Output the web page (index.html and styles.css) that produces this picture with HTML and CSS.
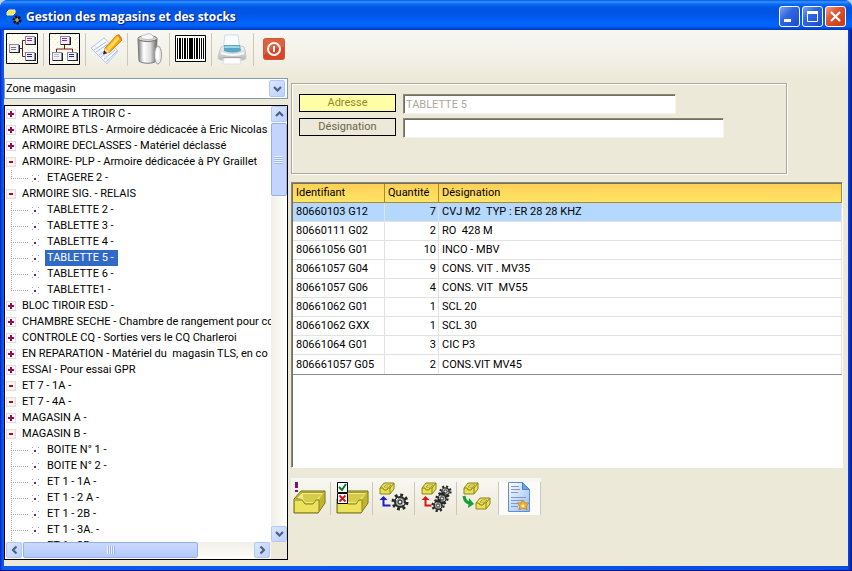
FILE: index.html
```html
<!DOCTYPE html>
<html lang="fr">
<head>
<meta charset="utf-8">
<title>Gestion des magasins et des stocks</title>
<link rel="stylesheet" href="styles.css">
</head>
<body>
<svg class="defs" aria-hidden="true">
  <defs>
    <linearGradient id="metal"><stop offset="0" stop-color="#777"/><stop offset=".3" stop-color="#fff"/><stop offset=".65" stop-color="#ddd"/><stop offset="1" stop-color="#666"/></linearGradient>
    <linearGradient id="shell" x2="0" y2="1"><stop offset="0" stop-color="#fafafa"/><stop offset="1" stop-color="#b4b6bb"/></linearGradient>
    <linearGradient id="sheet" x2="1" y2="1"><stop offset="0" stop-color="#fff"/><stop offset="1" stop-color="#8dbcf0"/></linearGradient>
    <pattern id="dots" width="5" height="5" patternUnits="userSpaceOnUse"><rect width="5" height="5" fill="#fffef8"/><path d="M1 1h1v1H1zM3 4h1v1H3z" fill="#f8e890"/></pattern>
    <symbol id="node" viewBox="0 0 11 10"><path d="M0 0h10v9H0z" fill="#888aa0"/><path d="M1 9h10V1h-1v7H1z" fill="#222"/><path d="M1 1h8v7H1z" fill="#f2f2fa"/></symbol>
    <symbol id="tray" viewBox="0 0 33 24"><path d="M1 9 8 1h24v12l-7 10H1z" fill="#d8cc3a" stroke="#6f6a14"/><path d="M2 9h7l3 4h8l3-4h3l5-7H9z" fill="#a9a020"/><path d="M4 8 9 3h21l-4 6h-3l-3 4h-8L9 9z" fill="#f0e888"/><path d="M10 8V4h19l-5 5-4 3h-8z" fill="#d6cc4c"/><path d="M2 10h7l3 4h8l3-4h3v12H2z" fill="#ece25c"/><path d="M26 10l5-7v10l-5 8z" fill="#c0b530"/><path d="M2 10h7l3 4h8l3-4h3v12" fill="none" stroke="#8d8520"/></symbol>
    <symbol id="box" viewBox="0 0 16 13"><path d="M1 6 5 1h10v6l-4 5H1z" fill="#e9df58" stroke="#8c8414"/><path d="M1 6h3l1 2h3l1-2h2l4-5M11 6v6" fill="none" stroke="#8c8414"/><path d="M5 5l2-2h5l-2 2z" fill="#fffbb0" stroke="#aaa12c"/></symbol>
    <symbol id="gear" viewBox="0 0 18 18"><circle cx="9" cy="9" r="7" fill="none" stroke="#252525" stroke-width="3" stroke-dasharray="2.8 2.7"/><circle cx="9" cy="9" r="5" fill="#a2abb0" stroke="#2a2a2a" stroke-width="2"/><circle cx="9" cy="9" r="2" fill="#f4f1e4" stroke="#111"/><path d="M5 7l2-2M12 12l1-2" stroke="#fff"/></symbol>
    <symbol id="chev" viewBox="0 0 9 6"><path d="M1 1l3.5 3.5L8 1" fill="none" stroke="#4d6185" stroke-width="2.2"/></symbol>
  </defs>
</svg>
<div class="window">
  <header class="titlebar">
    <svg class="appicon" width="16" height="16" viewBox="0 0 16 16" aria-hidden="true"><path d="M1 3 3 1h6v3L7 6H1z" fill="#f1e64e" stroke="#f9f6a4"/><path d="M2 8v3h3" stroke="#08a" fill="none"/><circle cx="11" cy="11" r="3" fill="#555" stroke="#111" stroke-width="3" stroke-dasharray="2 1"/><path d="M11 9v4M9 11h4" stroke="#bbb"/></svg>
    <h1>Gestion des magasins et des stocks</h1>
    <div class="caption">
      <button type="button" aria-label="Réduire"><svg width="19" height="19" viewBox="0 0 19 19"><path d="M4 12h7v3H4z" fill="#fff"/></svg></button>
      <button type="button" aria-label="Agrandir"><svg width="19" height="19" viewBox="0 0 19 19"><path d="M4.500 5v9.500h10V5" fill="none" stroke="#fff"/><path d="M4 4h11v3H4z" fill="#fff"/></svg></button>
      <button type="button" class="close" aria-label="Fermer"><svg width="19" height="19" viewBox="0 0 19 19"><path d="M5 5l9 9M14 5l-9 9" stroke="#fff" stroke-width="2.200"/></svg></button>
    </div>
  </header>
  <div class="client">
    <nav class="toolbar" aria-label="Outils">
      <div class="tool"><button type="button" aria-label="Arborescence horizontale"><svg width="32" height="32" viewBox="0 0 32 32"><path d="M.500.500h31v30H.500z" fill="url(#dots)" stroke="#000"/><path d="M13 15.500h4M20 7.500h-3.500v16H20" fill="none" stroke="#7c1010"/><use href="#node" x="3" y="11" width="11" height="10"/><use href="#node" x="19" y="3" width="11" height="10"/><use href="#node" x="19" y="19" width="11" height="10"/><path d="M5 14.500h5M5 16.500h5" stroke="#777"/><path d="M21 5.500h5M21 7.500h5" stroke="#a0288c"/><path d="M21 21.500h5M21 23.500h5" stroke="#2424a0"/></svg></button></div>
      <div class="tool"><button type="button" aria-label="Arborescence verticale"><svg width="32" height="32" viewBox="0 0 32 32"><path d="M.500.500h30v31H.500z" fill="url(#dots)" stroke="#000"/><path d="M15.500 12v4M7.500 20v-4h16v4" fill="none" stroke="#7c1010"/><use href="#node" x="11" y="3" width="11" height="10"/><use href="#node" x="3" y="19" width="11" height="10"/><use href="#node" x="18" y="19" width="11" height="10"/><path d="M13 5.500h5M13 7.500h5" stroke="#a0288c"/><path d="M5 21.500h5M5 23.500h5" stroke="#bbb"/><path d="M20 21.500h5M20 23.500h5" stroke="#2424a0"/></svg></button></div>
      <div class="tool"><button type="button" aria-label="Modifier"><svg width="32" height="32" viewBox="0 0 32 32"><path d="M0 15 13 5l14 13-11 13z" fill="#f4f8ff" stroke="#b4c8e8"/><path d="M3 17l12-8M5 19l12-8M8 22l12-9M10 24l12-9M13 26l11-9M15 29l11-11" stroke="#a8c2ea"/><path d="M4 13l14 15" stroke="#d4e0f6"/><path d="M14 15 26 2l5 5-12 12-6 2z" fill="#f9a90e" stroke="#d98208"/><path d="M16 15 27 3l2 2-11 13z" fill="#ffd95a"/><path d="M14 15l5 4-6 2z" fill="#f6d7a0"/><path d="M13 17.500l3 2.500-4 1.500z" fill="#222"/><path d="M26 2l2-1 3 4-1 2z" fill="#e47f1c"/></svg></button></div>
      <div class="tool"><button type="button" aria-label="Supprimer"><svg width="32" height="32" viewBox="0 0 32 32"><path d="M5 6c3 2 16 2 19 0l-1 22c-2 3-14 3-17 0z" fill="url(#metal)" stroke="#777"/><ellipse cx="14.500" cy="5.500" rx="9.500" ry="3" fill="#d8d8dc" stroke="#707070"/><path d="M8 5c0-4 4-2 6-4 3-1 6 1 7 4-3 2-9 2-13 0z" fill="#fafafa" stroke="#bbb"/><ellipse cx="25" cy="22" rx="3.500" ry="9" fill="#ededf0" stroke="#999"/><ellipse cx="24.500" cy="21" rx="1.500" ry="6" fill="#fff"/></svg></button></div>
      <div class="tool"><button type="button" aria-label="Code-barres"><svg width="32" height="32" viewBox="0 0 32 32"><path d="M.500 2.500h30v26H.500z" fill="#fff" stroke="#000"/><path d="M2 5h1v21H2zM4 5h2v21H4zM7 5h1v21H7zM9 5h2v21H9zM12 5h1v21h-1zM14 5h4v21h-4zM19 5h1v21h-1zM21 5h2v21h-2zM24 5h1v21h-1zM26 5h1v21h-1zM28 5h1v21h-1z"/></svg></button></div>
      <div class="tool"><button type="button" aria-label="Imprimer"><svg width="32" height="32" viewBox="0 0 32 32"><path d="M3 17q0-4 4-4h17q4 0 4 4l1 7q0 3-3 3H4q-3 0-3-3z" fill="url(#shell)" stroke="#c4c6c9"/><path d="M8 2h13l2 14H6z" fill="#fbfcff" stroke="#d5d9df"/><path d="M7 12h16l1 6q-8 3-17 0z" fill="#58a8c4"/><path d="M8 13h14l1 2H7z" fill="#9fd6e6"/><path d="M4 20q12 4 23 0" fill="none" stroke="#f8f8f8" stroke-width="2"/><path d="M7 25h16l1 6H6z" fill="#fff" stroke="#dedede"/><path d="M6 24.500h18" stroke="#a4a4a4"/></svg></button></div>
      <div class="tool"><button type="button" aria-label="Quitter"><svg width="32" height="32" viewBox="0 0 32 32"><rect x="4.500" y="5.500" width="21" height="21" rx="2" fill="#da4425" stroke="#c9583c"/><path d="M5 6h20v8Q13 14 5 22z" fill="#e56b48" opacity=".7"/><circle cx="15" cy="16" r="6" fill="none" stroke="#fff" stroke-width="2"/><path d="M15 13v6" stroke="#fff" stroke-width="2"/></svg></button></div>
    </nav>
    <div class="panes">
      <aside class="browser">
        <div class="combo">
          <select aria-label="Type de recherche"><option>Zone magasin</option></select>
          <span class="drop"><svg width="9" height="6"><use href="#chev"/></svg></span>
        </div>
        <div class="tree">
          <ul class="nodes">
            <li><div class="row"><i class="plus"></i><span>ARMOIRE A TIROIR C -</span></div></li>
            <li><div class="row"><i class="plus"></i><span>ARMOIRE BTLS - Armoire dédicacée à Eric Nicolas</span></div></li>
            <li><div class="row"><i class="plus"></i><span>ARMOIRE DECLASSES - Matériel déclassé</span></div></li>
            <li><div class="row"><i class="minus"></i><span>ARMOIRE- PLP - Armoire dédicacée à PY Graillet</span></div>
              <ul><li><i class="leaf"></i><span>ETAGERE 2 -</span></li></ul></li>
            <li><div class="row"><i class="minus"></i><span>ARMOIRE SIG. - RELAIS</span></div>
              <ul>
                <li><i class="leaf"></i><span>TABLETTE 2 -</span></li>
                <li><i class="leaf"></i><span>TABLETTE 3 -</span></li>
                <li><i class="leaf"></i><span>TABLETTE 4 -</span></li>
                <li><i class="leaf"></i><span class="selected">TABLETTE 5 -</span></li>
                <li><i class="leaf"></i><span>TABLETTE 6 -</span></li>
                <li><i class="leaf"></i><span>TABLETTE1 -</span></li>
              </ul></li>
            <li><div class="row"><i class="plus"></i><span>BLOC TIROIR ESD -</span></div></li>
            <li><div class="row"><i class="plus"></i><span>CHAMBRE SECHE - Chambre de rangement pour co</span></div></li>
            <li><div class="row"><i class="plus"></i><span>CONTROLE CQ - Sorties vers le CQ Charleroi</span></div></li>
            <li><div class="row"><i class="plus"></i><span>EN REPARATION - Matériel du&nbsp; magasin TLS, en co</span></div></li>
            <li><div class="row"><i class="plus"></i><span>ESSAI - Pour essai GPR</span></div></li>
            <li><div class="row"><i class="minus"></i><span>ET 7 - 1A -</span></div></li>
            <li><div class="row"><i class="minus"></i><span>ET 7 - 4A -</span></div></li>
            <li><div class="row"><i class="plus"></i><span>MAGASIN A -</span></div></li>
            <li><div class="row"><i class="minus"></i><span>MAGASIN B -</span></div>
              <ul>
                <li><i class="leaf"></i><span>BOITE N° 1 -</span></li>
                <li><i class="leaf"></i><span>BOITE N° 2 -</span></li>
                <li><i class="leaf"></i><span>ET 1 - 1A -</span></li>
                <li><i class="leaf"></i><span>ET 1 - 2 A -</span></li>
                <li><i class="leaf"></i><span>ET 1 - 2B -</span></li>
                <li><i class="leaf"></i><span>ET 1 - 3A. -</span></li>
                <li class="more"><i class="leaf"></i><span>ET 1 - 3B -</span></li>
              </ul></li>
          </ul>
          <div class="scroll vertical">
            <button type="button" class="up" aria-label="Haut"><svg width="9" height="6"><use href="#chev"/></svg></button>
            <div class="thumb"></div>
            <button type="button" class="down" aria-label="Bas"><svg width="9" height="6"><use href="#chev"/></svg></button>
          </div>
          <div class="scroll horizontal">
            <button type="button" class="left" aria-label="Gauche"><svg width="9" height="6"><use href="#chev"/></svg></button>
            <div class="thumb"></div>
            <button type="button" class="right" aria-label="Droite"><svg width="9" height="6"><use href="#chev"/></svg></button>
          </div>
        </div>
      </aside>
      <main class="detail">
        <form class="place">
          <label for="adresse" class="current">Adresse</label>
          <input id="adresse" type="text" value="TABLETTE 5" disabled>
          <label for="designation">Désignation</label>
          <input id="designation" class="wide" type="text">
        </form>
        <div class="stock">
          <table>
            <thead><tr><th class="ident">Identifiant</th><th class="qty">Quantité</th><th>Désignation</th></tr></thead>
            <tbody>
              <tr class="active"><td>80660103 G12</td><td>7</td><td>CVJ M2&nbsp; TYP : ER 28 28 KHZ</td></tr>
              <tr><td>80660111 G02</td><td>2</td><td>RO&nbsp; 428 M</td></tr>
              <tr><td>80661056 G01</td><td>10</td><td>INCO - MBV</td></tr>
              <tr><td>80661057 G04</td><td>9</td><td>CONS. VIT . MV35</td></tr>
              <tr><td>80661057 G06</td><td>4</td><td>CONS. VIT&nbsp; MV55</td></tr>
              <tr><td>80661062 G01</td><td>1</td><td>SCL 20</td></tr>
              <tr><td>80661062 GXX</td><td>1</td><td>SCL 30</td></tr>
              <tr><td>80661064 G01</td><td>3</td><td>CIC P3</td></tr>
              <tr><td>806661057 G05</td><td>2</td><td>CONS.VIT MV45</td></tr>
            </tbody>
          </table>
        </div>
        <div class="actions">
          <div class="tool"><button type="button" aria-label="Nouveau stock"><svg width="33" height="32" viewBox="0 0 33 32"><use href="#tray" y="8" width="33" height="24"/><path d="M2 0h3v6H2zM2 8h3v2H2z" fill="#8a1070"/></svg></button></div>
          <div class="tool"><button type="button" aria-label="Contrôler le stock"><svg width="33" height="32" viewBox="0 0 33 32"><use href="#tray" y="8" width="33" height="24"/><path d="M1.500.500h10v10h-10zM1.500 11.500h10v10h-10z" fill="#fff" stroke="#000"/><path d="M3 5l3 3 4-6" fill="none" stroke="#087a28" stroke-width="2"/><path d="M3.500 13.500l6 6M9.500 13.500l-6 6" stroke="#d81818" stroke-width="2"/></svg></button></div>
          <div class="tool"><button type="button" aria-label="Sortie pour une machine"><svg width="33" height="32" viewBox="0 0 33 32"><use href="#box" x="1" width="16" height="13"/><use href="#gear" x="13" y="11" width="18" height="18"/><path d="M5.500 17v6.500h7" fill="none" stroke="#1c1cc8" stroke-width="2"/><path d="M5.500 14l4 4h-8z" fill="#1c1cc8"/></svg></button></div>
          <div class="tool"><button type="button" aria-label="Sortie pour plusieurs machines"><svg width="33" height="32" viewBox="0 0 33 32"><use href="#box" x="1" width="16" height="13"/><use href="#gear" x="19" y="2" width="13" height="15"/><use href="#gear" x="15" y="9" width="14" height="15"/><use href="#gear" x="11" y="16" width="14" height="15"/><path d="M5.500 17v6.500h6" fill="none" stroke="#d81818" stroke-width="2"/><path d="M5.500 14l4 4h-8z" fill="#d81818"/></svg></button></div>
          <div class="tool"><button type="button" aria-label="Transférer"><svg width="33" height="32" viewBox="0 0 33 32"><use href="#box" x="1" width="16" height="13"/><use href="#box" x="13" y="15" width="16" height="13"/><path d="M2 14q1 7 6 7" fill="none" stroke="#18a038" stroke-width="3"/><path d="M7 16l5 6-6 4z" fill="#18a038"/></svg></button></div>
          <div class="tool paper"><button type="button" aria-label="Rapport"><svg width="33" height="32" viewBox="0 0 33 32"><path d="M4.500.500h14l7 7v22h-21z" fill="url(#sheet)" stroke="#5f8cd4"/><path d="M18.500.500v7h7z" fill="#6ea2e6" stroke="#4a7fd0"/><path d="M7 4.500h8M7 7.500h9M7 10.500h7M7 15.500h15M7 18.500h12M7 21.500h7M7 24.500h7" stroke="#8395d4"/><path d="M19 18l2 3 4 0-3 3 1 4-4-2-4 2 1-4-3-3 4 0z" fill="#f3b32c" stroke="#c98a2a"/><circle cx="19" cy="24" r="1.500" fill="#fff6c8"/></svg></button></div>
        </div>
      </main>
    </div>
  </div>
</div>
</body>
</html>
```

FILE: styles.css
```css
* { box-sizing: border-box; }

body {
  margin: 0;
  background: #b9d4f0;
  color: #000;
  font: 11px/16px Roboto, "Liberation Sans", sans-serif;
}

.defs { position: absolute; width: 0; height: 0; }
svg { display: block; }
ul { margin: 0; padding: 0; list-style: none; }
button { border: 0; padding: 0; background: none; }

.window {
  display: flex;
  flex-direction: column;
  height: 100vh;
  min-height: 480px;
  padding: 0 4px 4px;
  background: linear-gradient(90deg, #0019cf, #0855dd 2px, #0a5cf0 4px, #0a4ce0 calc(100% - 4px), #0030c0 calc(100% - 2px), #00138c);
  border-bottom: 1px solid #00138c;
  border-radius: 8px 8px 0 0;
  overflow: hidden;
}

.titlebar {
  display: flex;
  flex: none;
  align-items: center;
  gap: 4px;
  height: 30px;
  margin: 0 -4px;
  padding: 3px 6px 0;
  background: linear-gradient(#0058e6, #3a93ff 2px, #0a6cf5 4px, #0054e3 8px, #0055e5 14px, #0063fb 23px, #0061f9 26px, #0043cf 29px, #0036b0);
}
.titlebar h1 {
  flex: 1;
  margin: 0;
  color: #fff;
  font: bold 12px/18px "Open Sans", "Noto Sans", sans-serif;
  text-shadow: 1px 1px 1px #0a1883;
}
.caption { display: flex; gap: 2px; }
.caption button {
  border: 1px solid #fff;
  border-radius: 3px;
  background: linear-gradient(135deg, #7ba5f5, #2f66e2 40%, #1c4bd0);
}
.caption .close { background: linear-gradient(135deg, #f0a088, #df5230 40%, #c63a14); }

.client {
  display: flex;
  flex: 1;
  flex-direction: column;
  min-height: 0;
  background: #ece9d8;
}

.toolbar, .actions { display: flex; }
.toolbar {
  flex: none;
  height: 48px;
  padding-top: 3px;
  background: linear-gradient(#f8f7f2, #f3f1e7 28px, #ece9d8);
}
.tool {
  flex: none;
  width: 42px;
  height: 33px;
  padding-left: 5px;
  border-right: 1px solid #cbc8ba;
}
.tool:first-child { width: 40px; padding-left: 2px; }
.toolbar .tool:last-child { border: 0; }

.panes { display: flex; flex: 1; gap: 3px; min-height: 0; }

.browser {
  display: flex;
  flex: none;
  flex-direction: column;
  gap: 6px;
  width: 284px;
  padding-bottom: 6px;
}

.combo {
  display: flex;
  flex: none;
  align-items: center;
  height: 21px;
  padding-right: 2px;
  border: 1px solid #7f9db9;
  background: #fff;
}
.combo select {
  flex: 1;
  height: 19px;
  padding: 0 1px;
  border: 0;
  appearance: none;
  background: none;
  color: #000;
  font: inherit;
}
.drop, .scroll button, .thumb {
  border: 1px solid #b4c8f6;
  border-radius: 2px;
  background: linear-gradient(135deg, #dbe6ff, #bdd0fb);
}
.drop { display: grid; place-items: center; width: 16px; height: 17px; }

.tree {
  display: grid;
  flex: 1;
  grid-template: minmax(0, 1fr) 17px / minmax(0, 1fr) 16px;
  min-height: 0;
  border: 1px solid #000;
  background: #fff;
}
.nodes { overflow: hidden; white-space: nowrap; }
.nodes .row, .nodes ul li { display: flex; align-items: center; height: 16px; }
.row { padding-left: 1px; gap: 4px; }
.row span { padding-left: 2px; }

.plus, .minus {
  flex: none;
  width: 10px;
  height: 10px;
  border: 1px solid #dedce6;
  background: linear-gradient(#8c1450, #8c1450) center / 4px 2px no-repeat, #fbf4e2;
}
.plus {
  background:
    linear-gradient(#8c1450, #8c1450) center / 6px 2px no-repeat,
    linear-gradient(#8c1450, #8c1450) center / 2px 6px no-repeat,
    #faf6fa;
}

.nodes ul { padding-left: 6px; }
.nodes ul li::before {
  content: "";
  width: 17px;
  height: 16px;
  background:
    repeating-linear-gradient(#a8a8a8 0 1px, transparent 1px 2px) 0 0 / 1px 100% no-repeat,
    repeating-linear-gradient(90deg, #a8a8a8 0 1px, transparent 1px 2px) 0 8px / 100% 1px no-repeat;
}
.nodes ul li:last-child:not(.more)::before { background-size: 1px 8px, 100% 1px; }
.leaf {
  width: 7px;
  height: 7px;
  margin: 0 6px 0 4px;
  background:
    linear-gradient(#7a2a60, #7a2a60) 2px 3px / 2px 2px no-repeat,
    linear-gradient(#8fa4d0, #8fa4d0) 0 0 / 1px 1px no-repeat,
    linear-gradient(#8fa4d0, #8fa4d0) 100% 0 / 1px 1px no-repeat,
    linear-gradient(#8fa4d0, #8fa4d0) 0 100% / 1px 1px no-repeat,
    linear-gradient(#8fa4d0, #8fa4d0) 100% 100% / 1px 1px no-repeat;
}
.nodes ul span { padding: 0 2px; }
.nodes ul .selected { padding-right: 4px; background: #316ac5; color: #fff; }

.scroll { display: flex; gap: 1px; background: linear-gradient(90deg, #f1efe6, #fefefb); }
.scroll button { display: grid; flex: none; place-items: center; width: 16px; height: 16px; }
.thumb { display: grid; place-items: center; border-color: #98b0e8; background: #c4d5fd; }
.thumb::before { content: ""; width: 8px; height: 8px; }
.vertical { flex-direction: column; }
.vertical .thumb { height: 73px; }
.vertical .thumb::before { background: repeating-linear-gradient(#eef4ff 0 1px, #9bb4ee 1px 2px); }
.vertical .down { margin-top: auto; }
.horizontal { padding: 0 1px 1px; background: linear-gradient(#f1efe6, #fefefb); }
.horizontal .thumb { width: 175px; background: linear-gradient(#cad9fe, #b4c9fa); }
.horizontal .thumb::before { background: repeating-linear-gradient(90deg, #eef4ff 0 1px, #9bb4ee 1px 2px); }
.horizontal .right { margin-left: auto; }
.tree::after { content: ""; background: #ece9d8; }
.up svg { transform: rotate(180deg); }
.left svg { transform: rotate(90deg); }
.right svg { transform: rotate(-90deg); }

.detail {
  display: flex;
  flex: 1;
  flex-direction: column;
  min-width: 0;
  padding: 5px 5px 49px 0;
}

.place {
  display: grid;
  flex: none;
  grid-template-columns: 97px minmax(0, 1fr);
  align-content: start;
  gap: 4px 7px;
  max-width: 496px;
  height: 91px;
  padding: 10px 7px;
  border: 1px solid #aca899;
  box-shadow: 1px 1px #fff, inset 1px 1px #fff;
}
.place label {
  height: 18px;
  border: 1px solid #000;
  color: #6b6648;
  line-height: 16px;
  text-align: center;
}
.place .current { background: #ffffa8; color: #8c8a20; }
.place input {
  width: 273px;
  height: 20px;
  padding: 0 2px;
  border: 1px solid;
  border-color: #8b887a #f6f4ea #f6f4ea #8b887a;
  box-shadow: inset 1px 1px #716f64;
  background: #fff;
  font: inherit;
}
.place input:disabled { color: #aca899; }
.place .wide { width: 321px; }

.stock {
  flex: 1;
  min-height: 0;
  margin-top: 8px;
  overflow: hidden;
  border: 1px solid;
  border-color: #8b887a #fff #fff #8b887a;
  box-shadow: inset 1px 1px #716f64;
  background: #fff;
  padding: 1px 0 0 1px;
}
table { width: 100%; border-collapse: separate; border-spacing: 0; border-bottom: 1px solid #8b8b8b; }
th {
  height: 19px;
  padding: 0 3px;
  border-right: 1px solid #a8873c;
  border-bottom: 1px solid #a8873c;
  background: linear-gradient(#ffd055, #ffe566);
  font-weight: normal;
  text-align: left;
}
.ident { width: 92px; }
.qty { width: 54px; }
td { height: 19px; padding: 0 3px; border-right: 1px solid #e2e2e2; border-bottom: 1px solid #e2e2e2; }
td:nth-child(2) { padding-right: 2px; text-align: right; }
tr:last-child td { border-bottom: 0; }
.active td { background: #b5d8fe; }

.actions {
  flex: none;
  align-self: flex-start;
  margin-top: 10px;
  padding: 4px 0 2px;
  background: linear-gradient(#f8f7f2, #ece9d8);
}
.paper { background: #fbfbfa; }
```
